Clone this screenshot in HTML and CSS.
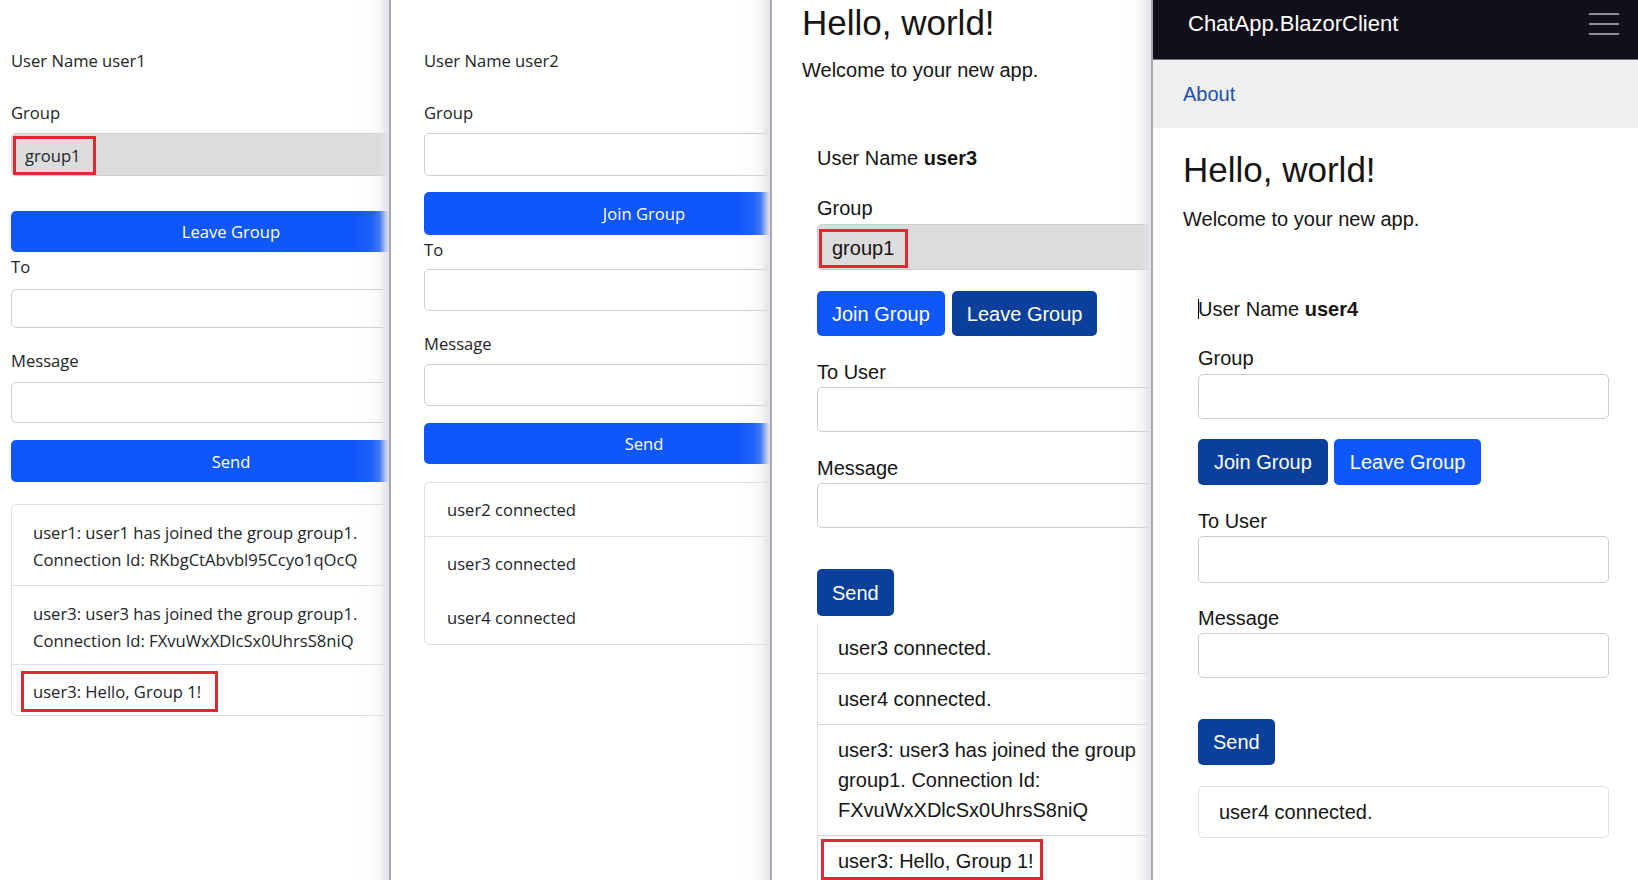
FILE: index.html
```html
<!DOCTYPE html>
<html lang="en">
<head>
<meta charset="utf-8">
<title>ChatApp.BlazorClient</title>
<link rel="stylesheet" href="styles.css">
</head>
<body>
<div class="screens">

  <section class="win win-a w1 edge">
    <div class="form-a">
      <div class="line name">User Name user1</div>
      <div class="line lbl-group">Group</div>
      <div class="field field-off f-group"><span class="mark mark-a">group1</span></div>
      <button class="btn-wide b-group" type="button">Leave Group</button>
      <div class="line lbl-to">To</div>
      <input class="field f-to" type="text">
      <div class="line lbl-msg">Message</div>
      <input class="field f-msg" type="text">
      <button class="btn-wide b-send" type="button">Send</button>
      <ul class="msgs">
        <li>user1: user1 has joined the group group1. Connection Id: RKbgCtAbvbl95Ccyo1qOcQ</li>
        <li>user3: user3 has joined the group group1. Connection Id: FXvuWxXDlcSx0UhrsS8niQ</li>
        <li class="marked"><span class="mark mark-li">user3: Hello, Group 1!</span></li>
      </ul>
    </div>
  </section>

  <section class="win win-a w2 edge">
    <div class="form-a">
      <div class="line name">User Name user2</div>
      <div class="line lbl-group">Group</div>
      <input class="field f-group" type="text">
      <button class="btn-wide b-group" type="button">Join Group</button>
      <div class="line lbl-to">To</div>
      <input class="field f-to" type="text">
      <div class="line lbl-msg">Message</div>
      <input class="field f-msg" type="text">
      <button class="btn-wide b-send" type="button">Send</button>
      <ul class="msgs">
        <li>user2 connected</li>
        <li class="no-sep">user3 connected</li>
        <li>user4 connected</li>
      </ul>
    </div>
  </section>

  <section class="win win-b w3 edge">
    <div class="content">
      <h1 class="hello">Hello, world!</h1>
      <p class="lead">Welcome to your new app.</p>
      <div class="form-b">
        <div class="line name">User Name <b>user3</b></div>
        <div class="line lbl-group">Group</div>
        <div class="field field-b field-off f-group"><span class="mark mark-b">group1</span></div>
        <div class="btn-row">
          <button class="btn btn-light" type="button">Join Group</button>
          <button class="btn btn-dark" type="button">Leave Group</button>
        </div>
        <div class="line lbl-to">To User</div>
        <input class="field field-b" type="text">
        <div class="line lbl-msg">Message</div>
        <input class="field field-b" type="text">
        <button class="btn btn-dark b-send" type="button">Send</button>
        <ul class="feed feed-cut">
          <li>user3 connected.</li>
          <li>user4 connected.</li>
          <li>user3: user3 has joined the group group1. Connection Id: FXvuWxXDlcSx0UhrsS8niQ</li>
          <li class="marked"><span class="mark mark-feed">user3: Hello, Group 1!</span></li>
        </ul>
      </div>
    </div>
  </section>

  <section class="win win-b w4">
    <header class="topbar">
      <span class="brand">ChatApp.BlazorClient</span>
      <svg class="toggler" width="30" height="22" viewBox="0 0 30 22" aria-hidden="true">
        <path d="M0 1h30M0 11h30M0 21h30" stroke="#8b8f9e" stroke-width="2" fill="none"/>
      </svg>
    </header>
    <nav class="subnav"><a class="about" href="#">About</a></nav>
    <div class="content">
      <h1 class="hello">Hello, world!</h1>
      <p class="lead">Welcome to your new app.</p>
      <div class="form-b">
        <div class="line name"><span class="caret"></span>User Name <b>user4</b></div>
        <div class="line lbl-group">Group</div>
        <input class="field field-b f-group" type="text">
        <div class="btn-row">
          <button class="btn btn-dark" type="button">Join Group</button>
          <button class="btn btn-light" type="button">Leave Group</button>
        </div>
        <div class="line lbl-to">To User</div>
        <input class="field field-b f-to" type="text">
        <div class="line lbl-msg">Message</div>
        <input class="field field-b f-msg" type="text">
        <button class="btn btn-dark b-send" type="button">Send</button>
        <ul class="feed">
          <li>user4 connected.</li>
        </ul>
      </div>
    </div>
  </section>

</div>
</body>
</html>
```

FILE: styles.css
```css
* { box-sizing: border-box; }

html, body {
  margin: 0;
  padding: 0;
  background: #fff;
}

body {
  width: 1638px;
  height: 880px;
  overflow: hidden;
}

.screens {
  display: flex;
  height: 880px;
}

.win {
  position: relative;
  flex: none;
  height: 880px;
  overflow: hidden;
}

.w1 { width: 391px; padding-left: 11px; }
.w2 { width: 381px; padding-left: 33px; }
.w3 { width: 381px; }
.w4 { width: 485px; }

/* shaded right edge of the stacked windows */
.edge::after {
  content: "";
  position: absolute;
  top: 0;
  right: 0;
  bottom: 0;
  width: 34px;
  background: linear-gradient(90deg,
    rgba(222, 222, 228, 0) 0%,
    rgba(222, 222, 228, 0.08) 50%,
    rgba(222, 222, 228, 0.25) 72%,
    rgba(226, 226, 230, 0.8) 90%,
    #e4e4e8 100%);
  border-right: 2px solid #a8a8b0;
  z-index: 2;
  pointer-events: none;
}

/* ---------- windows 1 & 2 ---------- */
.win-a {
  font-family: "Open Sans", "Noto Sans", sans-serif;
  font-size: 16.6px;
  color: #212529;
}

.form-a { width: 440px; }

.line { line-height: 25px; }

.field {
  display: block;
  width: 100%;
  margin: 0;
  padding: 0;
  border: 1px solid #cfcfcf;
  border-radius: 5px;
  background: #fff;
  font: inherit;
  color: inherit;
  outline: none;
}

.field-off {
  display: flex;
  align-items: flex-start;
  background: #dcdcdc;
  padding: 2px 0 0 1px;
}

.mark {
  display: inline-block;
  border: 3px solid #e0282e;
}

.mark-a {
  height: 39px;
  line-height: 33px;
  padding: 0 12px 0 9px;
}

.btn-wide {
  display: block;
  width: 100%;
  margin: 0;
  padding: 0;
  border: 0;
  border-radius: 5px;
  background: #0f56fb;
  color: #fff;
  font: inherit;
  text-align: center;
}

.msgs {
  list-style: none;
  margin: 0;
  padding: 0;
  border: 1px solid #dfdfdf;
  border-radius: 5px;
}

.msgs li {
  padding: 14px 21px 12px;
  line-height: 27px;
  border-top: 1px solid #dfdfdf;
}

.msgs li:first-child { border-top: 0; }

.msgs li.marked { padding: 6px 21px 3px; }

.mark-li {
  vertical-align: top;
  margin-left: -12px;
  padding: 4px 14px 4px 9px;
}

/* window 1 spacing */
.w1 .name { margin-top: 48px; }
.w1 .lbl-group { margin-top: 27px; }
.w1 .f-group { margin-top: 8px; height: 43px; }
.w1 .b-group { margin-top: 35px; height: 41px; }
.w1 .lbl-to { margin-top: 2px; }
.w1 .f-to { margin-top: 10px; height: 39px; }
.w1 .lbl-msg { margin-top: 20px; }
.w1 .f-msg { margin-top: 9px; height: 41px; }
.w1 .b-send { margin-top: 17px; height: 42px; }
.w1 .msgs { margin-top: 22px; }
.w1 .msgs li:nth-child(2) { padding-bottom: 10px; }

/* window 2 spacing */
.w2 .name { margin-top: 48px; }
.w2 .lbl-group { margin-top: 27px; }
.w2 .f-group { margin-top: 8px; height: 43px; }
.w2 .b-group { margin-top: 16px; height: 43px; }
.w2 .lbl-to { margin-top: 2px; }
.w2 .f-to { margin-top: 7px; height: 42px; }
.w2 .lbl-msg { margin-top: 20px; }
.w2 .f-msg { margin-top: 8px; height: 42px; }
.w2 .b-send { margin-top: 17px; height: 41px; }
.w2 .msgs { margin-top: 18px; }
.w2 .msgs li { padding: 13px 22px 13px; }
.w2 .msgs li.no-sep + li { border-top-color: transparent; }

/* ---------- windows 3 & 4 ---------- */
.win-b {
  font-family: "Liberation Sans", Arial, sans-serif;
  font-size: 20px;
  color: #151515;
}

.win-b .line { line-height: 30px; }

.content { padding-left: 30px; }

.hello {
  margin: 0;
  font-size: 35px;
  font-weight: 400;
  line-height: 42px;
}

.lead {
  margin: 0;
  line-height: 30px;
}

.form-b {
  width: 411px;
  margin-left: 15px;
}

.form-b b { font-weight: 700; }

.field-b {
  height: 45px;
  border-color: #cdcdcd;
}

.field-b.field-off {
  height: 46px;
  padding: 4px 0 0 1px;
  background: #dcdcdc;
}

.mark-b {
  height: 39px;
  line-height: 33px;
  padding: 0 11px 0 10px;
}

.btn-row {
  display: flex;
  gap: 6px;
}

.btn {
  display: block;
  height: 45px;
  margin: 0;
  padding: 0 15px;
  border: 0;
  border-radius: 5px;
  font: inherit;
  color: #fff;
  line-height: 30px;
}

.btn-light { background: #0f56fb; }
.btn-dark { background: #0a409c; }

.b-send { height: 46px; }

.feed {
  list-style: none;
  margin: 0;
  padding: 0;
  border: 1px solid #e0e0e0;
  border-radius: 5px;
  overflow: hidden;
}

.feed li {
  padding: 10px 20px;
  line-height: 30px;
  border-top: 1px solid #d6d6d6;
}

.feed li:first-child { border-top: 0; }

.feed-cut {
  border-top: 0;
  border-radius: 0;
  overflow: visible;
}

.feed-cut li:first-child { margin-top: -17px; }

.feed li.marked { padding: 3px 20px 0; }

.mark-feed {
  vertical-align: top;
  margin-left: -17px;
  padding: 4px 6px 1px 14px;
}

/* window 3 spacing */
.w3 .hello { margin-top: 2px; }
.w3 .lead { margin-top: 11px; }
.w3 .name { margin-top: 58px; }
.w3 .lbl-group { margin-top: 20px; }
.w3 .f-group { margin-top: 1px; }
.w3 .btn-row { margin-top: 21px; gap: 7px; }
.w3 .lbl-to { margin-top: 21px; }
.w3 .lbl-msg { margin-top: 21px; }
.w3 .b-send { margin-top: 41px; height: 47px; }
.w3 .feed { margin-top: 24px; }

/* window 4 */
.topbar {
  display: flex;
  justify-content: space-between;
  align-items: flex-start;
  height: 60px;
  padding: 9px 19px 0 35px;
  background: #110f1a;
  border-bottom: 1px solid #707070;
}

.brand {
  font-size: 22px;
  line-height: 30px;
  color: #fff;
}

.toggler {
  display: block;
  margin-top: 4px;
}

.subnav {
  height: 68px;
  padding: 19px 0 0 30px;
  background: #efefef;
}

.about {
  line-height: 30px;
  color: #1c4fb0;
  text-decoration: none;
}

.caret {
  display: inline-block;
  width: 1px;
  height: 20px;
  margin-right: -1px;
  background: #000;
  vertical-align: -3px;
}

.w4 .hello { margin-top: 21px; }
.w4 .lead { margin-top: 13px; }
.w4 .name { margin-top: 60px; }
.w4 .lbl-group { margin-top: 19px; }
.w4 .f-group { margin-top: 1px; height: 45px; }
.w4 .btn-row { margin-top: 20px; }
.w4 .btn-row .btn { height: 46px; padding: 0 16px; }
.w4 .lbl-to { margin-top: 21px; }
.w4 .f-to { height: 47px; }
.w4 .lbl-msg { margin-top: 20px; }
.w4 .f-msg { height: 45px; }
.w4 .b-send { margin-top: 41px; }
.w4 .feed { margin-top: 21px; }
```
